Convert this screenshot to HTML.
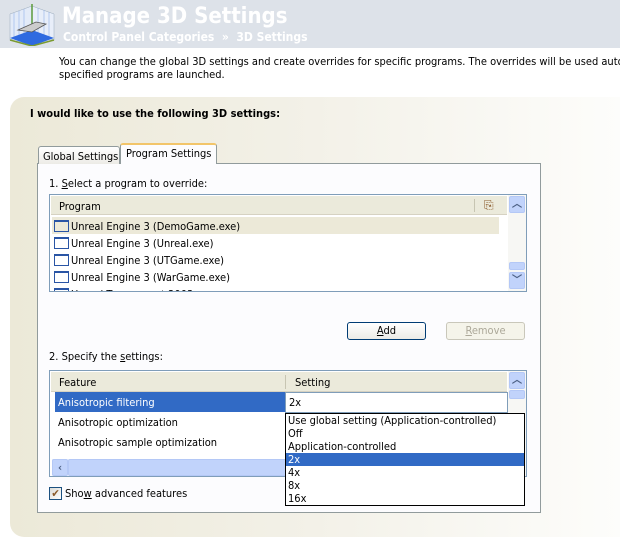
<!DOCTYPE html>
<html><head><style>
*{margin:0;padding:0;box-sizing:border-box}
html,body{width:620px;height:540px;overflow:hidden}
body{background:#fff;font-family:Tahoma,"DejaVu Sans Condensed","Liberation Sans",sans-serif;font-size:11px;color:#000;position:relative}
.a{position:absolute;white-space:nowrap}
.hdr{left:0;top:0;width:620px;height:48px;background:#dde2e9}
.sb{position:absolute;background:#c1d3fb;border:1px solid #b4c8f6;border-radius:2px}
.btn{border:1px solid #003c74;border-radius:3px;background:linear-gradient(#fff,#ecebe6);text-align:center;line-height:16px}
</style></head><body>
<div class="a hdr"></div>
<svg class="a" style="left:6px;top:2px" width="50" height="44" viewBox="0 0 50 44">
<polygon points="4,12 26,4 26,30 4,38" fill="#e3ebf8" stroke="#9ab" stroke-width="0.5"/>
<polygon points="26,4 48,12 48,38 26,30" fill="#e8eef9" stroke="#9ab" stroke-width="0.5"/>
<g stroke="#8fb0ea" stroke-width="0.6"><line x1="8" y1="11" x2="8" y2="37"/><line x1="13" y1="9" x2="13" y2="35"/><line x1="18" y1="7" x2="18" y2="33"/><line x1="32" y1="6" x2="32" y2="32"/><line x1="38" y1="8" x2="38" y2="34"/><line x1="43" y1="10" x2="43" y2="36"/></g>
<polygon points="4,36 26,28 48,36 26,44" fill="#2f6ae0"/>
<line x1="26" y1="2" x2="26" y2="30" stroke="#5a9a3a" stroke-width="1.5"/>
<path d="M12 28 L30 20 L40 22 L26 30 Z" fill="#ccc" stroke="#555" stroke-width="0.8"/>
<line x1="4" y1="38" x2="26" y2="44" stroke="#7a9a30" stroke-width="1.5"/>
<line x1="26" y1="44" x2="48" y2="38" stroke="#7a9a30" stroke-width="1.5"/>
</svg>
<div class="a" style="left:62px;top:4px;font-size:22px;font-weight:bold;color:#fff">Manage 3D Settings</div>
<div class="a" style="left:63px;top:30px;font-size:12px;font-weight:bold;color:#fff">Control Panel Categories &nbsp;» &nbsp;3D Settings</div>
<div class="a" style="left:59px;top:55px;line-height:13px;width:561px;overflow:hidden">You can change the global 3D settings and create overrides for specific programs. The overrides will be used automatically each time the<br>specified programs are launched.</div>

<div class="a" style="left:10px;top:97px;width:610px;height:440px;border-radius:14px 0 0 14px;background:linear-gradient(90deg,#ece9d8 0%,#f3f1e8 50%,#fdfdfb 100%)"></div>
<div class="a" style="left:30px;top:107px;font-weight:bold">I would like to use the following 3D settings:</div>

<div class="a" style="left:37px;top:163px;width:504px;height:350px;background:#fcfcfe;border:1px solid #919b9c"></div>
<div class="a" style="left:38px;top:146px;width:82px;height:18px;border:1px solid #919b9c;border-bottom:none;border-radius:3px 3px 0 0;background:linear-gradient(#fff,#ecebe6);padding:3px 0 0 4px">Global Settings</div>
<div class="a" style="left:120px;top:143px;width:97px;height:21px;border:1px solid #919b9c;border-top:2px solid #f2c56a;border-bottom:none;border-radius:3px 3px 0 0;background:#fcfcfe;padding:2px 0 0 5px">Program Settings</div>

<div class="a" style="left:49px;top:177px">1. <u>S</u>elect a program to override:</div>
<div class="a" style="left:49px;top:194px;width:478px;height:98px;border:1px solid #7f9db9;background:#fff;overflow:hidden">
 <div class="a" style="left:1px;top:1px;width:456px;height:19px;background:#ebeadb;border-bottom:1px solid #d6d2c2"></div>
 <div class="a" style="left:9px;top:5px">Program</div>
 <div class="a" style="left:424px;top:4px;width:1px;height:13px;background:#c7c5b2"></div>
 <div class="a" style="left:434px;top:3px;color:#8a5a2a;font-size:12px">⎘</div>
 <div class="a" style="left:2px;top:22px;width:447px;height:17px;background:#ece9d8"></div>
 <div class="a" style="left:4px;top:23px;line-height:17px">
  <div><span style="display:inline-block;width:15px;height:12px;border:1px solid #2a55a5;border-top-width:2px;vertical-align:-2px;margin-right:2px"></span>Unreal Engine 3 (DemoGame.exe)</div>
  <div><span style="display:inline-block;width:15px;height:12px;border:1px solid #2a55a5;border-top-width:2px;vertical-align:-2px;margin-right:2px"></span>Unreal Engine 3 (Unreal.exe)</div>
  <div><span style="display:inline-block;width:15px;height:12px;border:1px solid #2a55a5;border-top-width:2px;vertical-align:-2px;margin-right:2px"></span>Unreal Engine 3 (UTGame.exe)</div>
  <div><span style="display:inline-block;width:15px;height:12px;border:1px solid #2a55a5;border-top-width:2px;vertical-align:-2px;margin-right:2px"></span>Unreal Engine 3 (WarGame.exe)</div>
  <div><span style="display:inline-block;width:15px;height:12px;border:1px solid #2a55a5;border-top-width:2px;vertical-align:-2px;margin-right:2px"></span>Unreal Tournament 2003</div>
 </div>
 <div class="a" style="left:458px;top:0;width:18px;height:96px;background:#f7f7f4"></div>
 <div class="sb" style="left:459px;top:1px;width:16px;height:17px;text-align:center;color:#4d6185;font-weight:bold;font-size:10px;line-height:15px">︿</div>
 <div class="sb" style="left:459px;top:67px;width:16px;height:8px"></div>
 <div class="sb" style="left:459px;top:77px;width:16px;height:17px;text-align:center;color:#4d6185;font-weight:bold;font-size:10px;line-height:15px">﹀</div>
</div>

<div class="a btn" style="left:347px;top:322px;width:79px;height:18px"><u>A</u>dd</div>
<div class="a" style="left:446px;top:322px;width:79px;height:18px;border:1px solid #c9c7ba;border-radius:3px;background:#f5f4ea;color:#aca899;text-align:center;line-height:16px"><u>R</u>emove</div>

<div class="a" style="left:49px;top:350px">2. Specify the <u>s</u>ettings:</div>
<div class="a" style="left:49px;top:370px;width:478px;height:107px;border:1px solid #7f9db9;background:#fff;overflow:hidden">
 <div class="a" style="left:1px;top:1px;width:456px;height:20px;background:#ebeadb;border-bottom:1px solid #d6d2c2"></div>
 <div class="a" style="left:9px;top:5px">Feature</div>
 <div class="a" style="left:235px;top:4px;width:1px;height:14px;background:#c7c5b2"></div>
 <div class="a" style="left:245px;top:5px">Setting</div>
 <div class="a" style="left:5px;top:21px;width:230px;height:20px;background:#316ac5"></div>
 <div class="a" style="left:8px;top:25px;color:#fff">Anisotropic filtering</div>
 <div class="a" style="left:235px;top:21px;width:223px;height:21px;border:1px solid #7f9db9;background:#fff;padding:3px 0 0 3px">2x</div>
 <div class="a" style="left:8px;top:45px">Anisotropic optimization</div>
 <div class="a" style="left:8px;top:65px">Anisotropic sample optimization</div>
 <div class="a" style="left:2px;top:88px;width:456px;height:17px;background:#eef3fd"></div>
 <div class="sb" style="left:2px;top:88px;width:16px;height:17px;text-align:center;color:#4d6185;font-weight:bold;line-height:15px">‹</div>
 <div class="sb" style="left:18px;top:88px;width:440px;height:17px"></div>
 <div class="a" style="left:458px;top:0;width:18px;height:105px;background:#f7f7f4"></div>
 <div class="sb" style="left:459px;top:1px;width:16px;height:17px;text-align:center;color:#4d6185;font-weight:bold;font-size:10px;line-height:15px">︿</div>
 <div class="sb" style="left:459px;top:19px;width:16px;height:9px"></div>
</div>

<div class="a" style="left:285px;top:413px;width:240px;height:93px;border:1px solid #000;background:#fff;line-height:13px">
 <div style="padding-left:2px">Use global setting (Application-controlled)</div>
 <div style="padding-left:2px">Off</div>
 <div style="padding-left:2px">Application-controlled</div>
 <div style="padding-left:2px;background:#316ac5;color:#fff">2x</div>
 <div style="padding-left:2px">4x</div>
 <div style="padding-left:2px">8x</div>
 <div style="padding-left:2px">16x</div>
</div>

<div class="a" style="left:49px;top:487px;width:13px;height:13px;border:1px solid #1c5180;background:linear-gradient(135deg,#dcdcd7,#fff);color:#8a5a2a;font-size:11px;line-height:11px;text-align:center">✔</div>
<div class="a" style="left:65px;top:487px">Sho<u>w</u> advanced features</div>
</body></html>
